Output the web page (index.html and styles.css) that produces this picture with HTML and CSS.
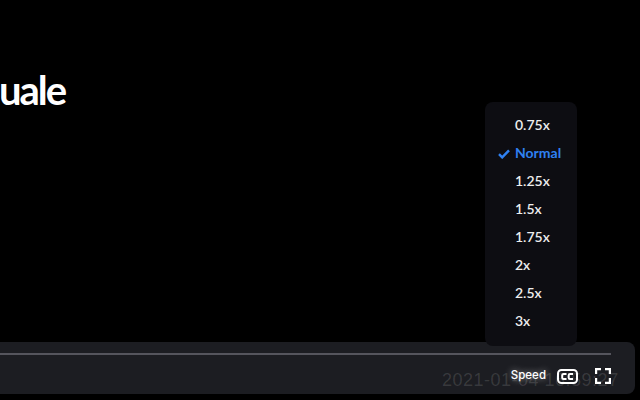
FILE: index.html
```html
<!DOCTYPE html>
<html lang="it">
<head>
    <meta charset="UTF-8">
    <meta name="viewport" content="width=device-width, initial-scale=1.0">
    <title>Player</title>
    <link rel="stylesheet" href="styles.css">
</head>
<body>
    <div class="player">
        <div class="stage">
            <h1 class="slide-title">uale</h1>
        </div>

        <ul class="speed-menu">
            <li>0.75x</li>
            <li class="selected">
                <svg class="check" viewBox="0 0 12 10" width="12" height="10"><path d="M1 5.2 4.2 8.4 11 1.4" fill="none" stroke="#2f81f2" stroke-width="2.4"/></svg>
                Normal
            </li>
            <li>1.25x</li>
            <li>1.5x</li>
            <li>1.75x</li>
            <li>2x</li>
            <li>2.5x</li>
            <li>3x</li>
        </ul>

        <div class="controls">
            <div class="progress"></div>
            <div class="buttons">
                <span class="speed-btn">Speed</span>
                <svg class="icon cc-icon" viewBox="0 0 21 15" width="21" height="15">
                    <rect x="1" y="1" width="19" height="13" rx="3.5" fill="none" stroke="#fff" stroke-width="2"/>
                    <path d="M9.500 5H6.500A1.300 1.300 0 0 0 5.200 6.300V8.700A1.300 1.300 0 0 0 6.500 10H9.500M16 5H13A1.300 1.300 0 0 0 11.700 6.300V8.700A1.300 1.300 0 0 0 13 10H16" fill="none" stroke="#fff" stroke-width="2"/>
                </svg>
                <svg class="icon" viewBox="0 0 16 16" width="16" height="16">
                    <path d="M1 6V1H6M10 1H15V6M15 10V15H10M6 15H1V10" fill="none" stroke="#fff" stroke-width="2.4"/>
                </svg>
            </div>
        </div>

        <div class="timestamp">2021-01-04 16:59:27</div>
    </div>
</body>
</html>
```

FILE: styles.css
```css
* {
    box-sizing: border-box;
}
html, body {
    margin: 0;
    padding: 0;
    height: 100%;
    background-color: #000;
    overflow: hidden;
}
body {
    font-family: Lato, "Liberation Sans", sans-serif;
}
.player {
    position: relative;
    display: flex;
    flex-direction: column;
    height: 400px;
    width: 640px;
    overflow: hidden;
}
.stage {
    flex: 1;
    padding-top: 67px;
}
.slide-title {
    margin: 0 0 0 -1px;
    font-family: Lato, sans-serif;
    font-size: 40px;
    line-height: 46px;
    font-weight: 700;
    letter-spacing: -2px;
    color: #fff;
}

/* menu velocita */
.speed-menu {
    position: absolute;
    left: 485px;
    top: 102px;
    width: 92px;
    margin: 0;
    padding: 9px 0 11px;
    list-style: none;
    background-color: #0d0d12;
    border-radius: 8px;
    z-index: 5;
}
.speed-menu li {
    position: relative;
    height: 28px;
    line-height: 28px;
    padding-left: 30px;
    font-size: 14px;
    font-weight: 600;
    color: #eeeeee;
}
.speed-menu .selected {
    color: #2f81f2;
    font-weight: 700;
}
.check {
    position: absolute;
    left: 13px;
    top: 10px;
}

.controls {
    height: 52px;
    margin: 0 5px 6px -10px;
    padding-top: 11px;
    background-color: #1c1d22;
    border-radius: 0 8px 8px 0;
}
.progress {
    height: 2px;
    margin-right: 24px;
    background-color: #55555d;
}
.buttons {
    display: flex;
    justify-content: flex-end;
    align-items: center;
    margin-top: 13px;
    padding-right: 24px;
}
.speed-btn {
    margin-bottom: 2px;
    font-family: Inter, sans-serif;
    font-size: 11.5px;
    font-weight: 500;
    color: #fff;
    text-shadow: 0 0 7px rgba(255, 255, 255, 0.6);
}
.icon {
    display: block;
}
.cc-icon {
    margin: 0 17px 0 11px;
}
.timestamp {
    position: absolute;
    left: 442px;
    top: 370px;
    font-family: "Liberation Sans", sans-serif;
    font-size: 18px;
    line-height: 20px;
    letter-spacing: 0.5px;
    white-space: nowrap;
    color: rgba(255, 255, 255, 0.13);
}
```
